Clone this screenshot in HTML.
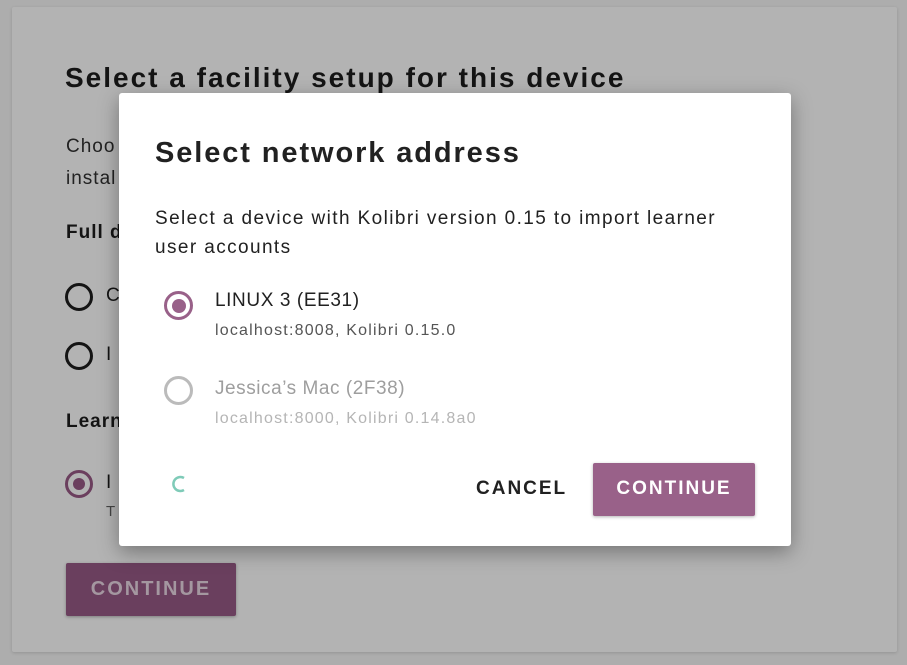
<!DOCTYPE html>
<html><head><meta charset="utf-8"><style>
body{margin:0;width:907px;height:665px;background:#adadad;font-family:"Liberation Sans",sans-serif;position:relative;overflow:hidden}
.card{position:absolute;left:12px;top:7px;width:885px;height:645px;background:#b3b3b3;border-radius:2px;box-shadow:0 1px 3px rgba(0,0,0,.15)}
.a{position:absolute;white-space:nowrap;color:#141414}
.r{position:absolute;width:28px;height:28px;border:3px solid #141414;border-radius:50%;box-sizing:border-box}
.modal{position:absolute;left:119px;top:93px;width:672px;height:453px;background:#fff;border-radius:3px;box-shadow:0 6px 20px rgba(0,0,0,.35)}
</style></head><body>
<div class="card"></div>
<div class="a" style="left:65px;top:62px;font-size:28px;font-weight:bold;letter-spacing:2px">Select a facility setup for this device</div>
<div class="a" style="left:66px;top:131px;font-size:19px;line-height:32px;color:#222;letter-spacing:1px">Choo<br>instal</div>
<div class="a" style="left:66px;top:222px;font-size:19px;font-weight:bold;letter-spacing:1px">Full d</div>
<div class="r" style="left:65px;top:283px"></div><div class="a" style="left:106px;top:285px;font-size:19px">C</div>
<div class="r" style="left:65px;top:342px"></div><div class="a" style="left:106px;top:344px;font-size:19px">I</div>
<div class="a" style="left:66px;top:411px;font-size:19px;font-weight:bold;letter-spacing:1px">Learn</div>
<div class="r" style="left:65px;top:470px;border-color:#6b3f5e"><div style="position:absolute;left:5px;top:5px;width:12px;height:12px;border-radius:50%;background:#6b3f5e"></div></div>
<div class="a" style="left:106px;top:472px;font-size:19px">I</div>
<div class="a" style="left:106px;top:503px;font-size:15px;color:#444">T</div>
<div style="position:absolute;left:66px;top:563px;width:170px;height:53px;background:#6a3f5e;border-radius:2px;box-shadow:0 1px 3px rgba(0,0,0,.3)"></div>
<div class="a" style="left:66px;top:578px;width:170px;text-align:center;font-size:20px;font-weight:bold;letter-spacing:2px;color:#a497a0">CONTINUE</div>

<div class="modal">
<div class="a" style="left:36px;top:44px;font-size:29px;font-weight:bold;color:#212121;letter-spacing:1.9px">Select network address</div>
<div class="a" style="left:36px;top:111px;font-size:19px;line-height:29px;color:#212121;letter-spacing:1.4px">Select a device with Kolibri version 0.15 to import learner<br>user accounts</div>
<div class="r" style="left:45px;top:198px;width:29px;height:29px;border-color:#996189;border-width:3px"><div style="position:absolute;left:4.5px;top:4.5px;width:14px;height:14px;border-radius:50%;background:#996189"></div></div>
<div class="a" style="left:96px;top:197px;font-size:19px;color:#212121;letter-spacing:0.6px">LINUX 3 (EE31)</div>
<div class="a" style="left:96px;top:229px;font-size:16px;color:#555;letter-spacing:1.2px">localhost:8008, Kolibri 0.15.0</div>
<div class="r" style="left:45px;top:283px;width:29px;height:29px;border-color:#bbb;border-width:3px"></div>
<div class="a" style="left:96px;top:285px;font-size:19px;color:#9e9e9e;letter-spacing:0.55px">Jessica’s Mac (2F38)</div>
<div class="a" style="left:96px;top:317px;font-size:16px;color:#b5b5b5;letter-spacing:1.2px">localhost:8000, Kolibri 0.14.8a0</div>
<svg style="position:absolute;left:50px;top:380px" width="20" height="22"><path d="M15 5 A7 7 0 1 0 15 17" fill="none" stroke="#7fcbb8" stroke-width="2.5"/></svg>
<div class="a" style="left:357px;top:385px;font-size:19px;font-weight:bold;letter-spacing:2px;color:#212121">CANCEL</div>
<div style="position:absolute;left:474px;top:370px;width:162px;height:53px;background:#996189;border-radius:2px;box-shadow:0 1px 3px rgba(0,0,0,.3)"></div>
<div class="a" style="left:474px;top:385px;width:162px;text-align:center;font-size:19px;font-weight:bold;letter-spacing:2px;color:#fff">CONTINUE</div>
</div>
</body></html>
